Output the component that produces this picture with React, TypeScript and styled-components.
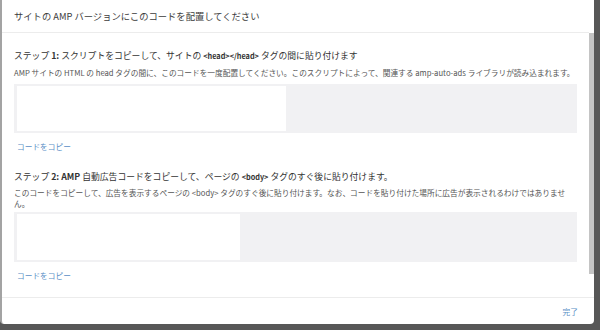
import React from "react";
import styled, { createGlobalStyle } from "styled-components";

const Global = createGlobalStyle`
  html, body { margin: 0; padding: 0; }
  body {
    background: #575757;
    font-family: "Noto Sans CJK JP", "Noto Sans", "Liberation Sans", sans-serif;
  }
`;

const Page = styled.div`
  width: 600px;
  height: 330px;
  display: flex;
  align-items: flex-start;
  background: #575757;
`;

const Dialog = styled.div`
  width: 594px;
  height: 324px;
  background: #ffffff;
  border-left: 2px solid #a3a3a3;
  border-radius: 0 0 4px 4px;
  display: flex;
  flex-direction: column;
  box-sizing: border-box;
`;

const Header = styled.div`
  height: 32px;
  flex: none;
  display: flex;
  align-items: center;
  padding-left: 12px;
  border-bottom: 1px solid #ececec;
  font-size: 9.3px;
  color: #3c3c3c;
  margin-right: 5px;
`;

const BodyRow = styled.div`
  flex: 1;
  display: flex;
  min-height: 0;
`;

const Content = styled.div`
  flex: 1;
  padding: 16px 12px 0 12px;
  display: flex;
  flex-direction: column;
`;

const ScrollTrack = styled.div`
  width: 5px;
  flex: none;
  display: flex;
  flex-direction: column;
`;

const ScrollThumb = styled.div`
  height: 241px;
  background: #c4c4c4;
`;

const StepTitle = styled.div<{ $gap: number }>`
  margin-top: ${(p) => p.$gap}px;
  font-size: 8.8px;
  line-height: 13px;
  color: #333;
  white-space: nowrap;
`;

const Strong = styled.b`
  font-weight: 700;
`;

const Tag = styled.b`
  font-weight: 700;
  font-size: 7.3px;
`;

const Desc = styled.div<{ $gap: number }>`
  margin-top: ${(p) => p.$gap}px;
  font-size: 7.7px;
  line-height: 11px;
  color: #555;
`;

const CodeBox = styled.div<{ $gap: number; $h: number }>`
  margin-top: ${(p) => p.$gap}px;
  height: ${(p) => p.$h}px;
  background: #f1f1f3;
  padding: 2px 3px;
  box-sizing: border-box;
  display: flex;
`;

const Redaction = styled.div`
  background: #ffffff;
  height: 100%;
`;

const CopyLink = styled.div<{ $gap: number }>`
  margin-top: ${(p) => p.$gap}px;
  font-size: 7.7px;
  line-height: 11px;
  color: #5b8fc6;
  padding-left: 3px;
`;

const Footer = styled.div`
  height: 26px;
  flex: none;
  border-top: 1px solid #ececec;
  display: flex;
  align-items: center;
  justify-content: flex-end;
  padding-right: 16px;
`;

const DoneButton = styled.span`
  font-size: 7.7px;
  color: #5b8fc6;
`;

export default function App() {
  return (
    <>
      <Global />
      <Page>
        <Dialog>
          <Header>サイトの AMP バージョンにこのコードを配置してください</Header>
          <BodyRow>
            <Content>
              <StepTitle $gap={0}>
                ステップ <Strong>1:</Strong> スクリプトをコピーして、サイトの <Tag>&lt;head&gt;&lt;/head&gt;</Tag> タグの間に貼り付けます
              </StepTitle>
              <Desc $gap={4}>
                AMP サイトの HTML の head タグの間に、このコードを一度配置してください。このスクリプトによって、関連する amp-auto-ads ライブラリが読み込まれます。
              </Desc>
              <CodeBox $gap={6} $h={49}>
                <Redaction style={{ width: 269 }} />
              </CodeBox>
              <CopyLink $gap={8}>コードをコピー</CopyLink>
              <StepTitle $gap={18}>
                ステップ <Strong>2: AMP</Strong> 自動広告コードをコピーして、ページの <Tag>&lt;body&gt;</Tag> タグのすぐ後に貼り付けます。
              </StepTitle>
              <Desc $gap={3}>
                このコードをコピーして、広告を表示するページの &lt;body&gt; タグのすぐ後に貼り付けます。なお、コードを貼り付けた場所に広告が表示されるわけではありません。
              </Desc>
              <CodeBox $gap={3} $h={50}>
                <Redaction style={{ width: 223 }} />
              </CodeBox>
              <CopyLink $gap={8}>コードをコピー</CopyLink>
            </Content>
            <ScrollTrack>
              <ScrollThumb />
            </ScrollTrack>
          </BodyRow>
          <Footer>
            <DoneButton>完了</DoneButton>
          </Footer>
        </Dialog>
      </Page>
    </>
  );
}
